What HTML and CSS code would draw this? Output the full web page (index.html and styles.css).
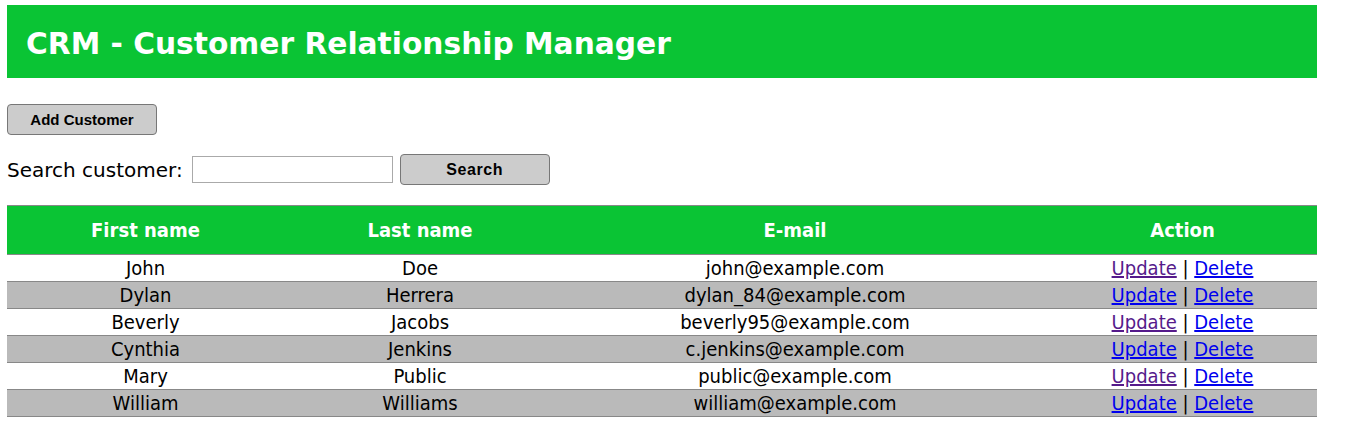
FILE: index.html
```html
<!DOCTYPE html>
<html lang="en">
<head>
<meta charset="utf-8">
<title>CRM - Customer Relationship Manager</title>
<link rel="stylesheet" href="styles.css">
</head>
<body>
<div class="page">
  <header class="banner">
    <h1 class="title">CRM - Customer Relationship Manager</h1>
  </header>
  <div class="toolbar">
    <button class="btn" type="button">Add Customer</button>
  </div>
  <form class="search">
    <label class="search-label" for="q">Search customer:</label>
    <input class="search-input" id="q" type="text">
    <button class="btn btn-search" type="button">Search</button>
  </form>
  <table class="grid">
    <colgroup>
      <col class="c1"><col class="c2"><col class="c3"><col class="c4">
    </colgroup>
    <thead>
      <tr><th>First name</th><th>Last name</th><th class="email">E-mail</th><th class="act">Action</th></tr>
    </thead>
    <tbody>
      <tr><td>John</td><td>Doe</td><td class="email">john@example.com</td><td class="act"><a class="visited" href="#">Update</a> | <a href="#">Delete</a></td></tr>
      <tr class="alt"><td>Dylan</td><td>Herrera</td><td class="email">dylan_84@example.com</td><td class="act"><a href="#">Update</a> | <a href="#">Delete</a></td></tr>
      <tr><td>Beverly</td><td>Jacobs</td><td class="email">beverly95@example.com</td><td class="act"><a class="visited" href="#">Update</a> | <a href="#">Delete</a></td></tr>
      <tr class="alt"><td>Cynthia</td><td>Jenkins</td><td class="email">c.jenkins@example.com</td><td class="act"><a href="#">Update</a> | <a href="#">Delete</a></td></tr>
      <tr><td>Mary</td><td>Public</td><td class="email">public@example.com</td><td class="act"><a class="visited" href="#">Update</a> | <a href="#">Delete</a></td></tr>
      <tr class="alt"><td>William</td><td>Williams</td><td class="email">william@example.com</td><td class="act"><a href="#">Update</a> | <a href="#">Delete</a></td></tr>
    </tbody>
  </table>
</div>
</body>
</html>
```
FILE: styles.css
```css
html, body {
  margin: 0;
  padding: 0;
  background: #fff;
}
body {
  font-family: "DejaVu Sans Condensed", "DejaVu Sans", sans-serif;
  color: #000;
}
.page {
  width: 1310px;
  padding: 5px 0 0 7px;
}
.banner {
  height: 73px;
  background: #0ac434;
  display: flex;
  align-items: center;
  padding-left: 19px;
  box-sizing: border-box;
}
.title {
  margin: 0;
  color: #fff;
  font-size: 29.7px;
  font-weight: bold;
  font-family: "DejaVu Sans", sans-serif;
  padding-top: 3px;
}
.toolbar {
  margin-top: 26px;
  display: flex;
}
.btn {
  width: 150px;
  height: 31px;
  background: #cccccc;
  border: 1px solid #777;
  border-radius: 4px;
  font-family: "Liberation Sans", Arial, sans-serif;
  font-weight: bold;
  font-size: 15px;
  color: #000;
  padding: 0;
}
.btn-search {
  font-size: 16px;
  letter-spacing: 0.6px;
}
.search {
  margin: 19px 0 0 0;
  display: flex;
  align-items: center;
}
.search-label {
  font-size: 20px;
  font-family: "DejaVu Sans", sans-serif;
  margin-right: 9px;
}
.search-input {
  width: 201px;
  height: 27px;
  box-sizing: border-box;
  border: 1px solid #aaa;
  margin: 0 7px 0 0;
  padding: 0 3px;
}
.grid {
  margin-top: 20px;
  width: 1310px;
  border-collapse: collapse;
  table-layout: fixed;
  font-size: 20px;
}
.c1 { width: 277px; }
.c2 { width: 272px; }
.c3 { width: 466px; }
.c4 { width: 295px; }
.grid thead tr {
  background: #0ac434;
  color: #fff;
  border-top: 1px solid #888;
}
.grid th {
  height: 48px;
  padding: 0;
  font-weight: bold;
  text-align: center;
}
.grid td {
  height: 26px;
  padding: 0;
  text-align: center;
  border-bottom: 1px solid #888;
}
.grid thead tr th {
  border-bottom: 1px solid #888;
}
.grid .email { padding-left: 12px; }
.grid .act { padding-left: 26px; }
.grid tr.alt { background: #bababa; }
.grid a { color: #0000ee; }
.grid a.visited { color: #551a8b; }
```
